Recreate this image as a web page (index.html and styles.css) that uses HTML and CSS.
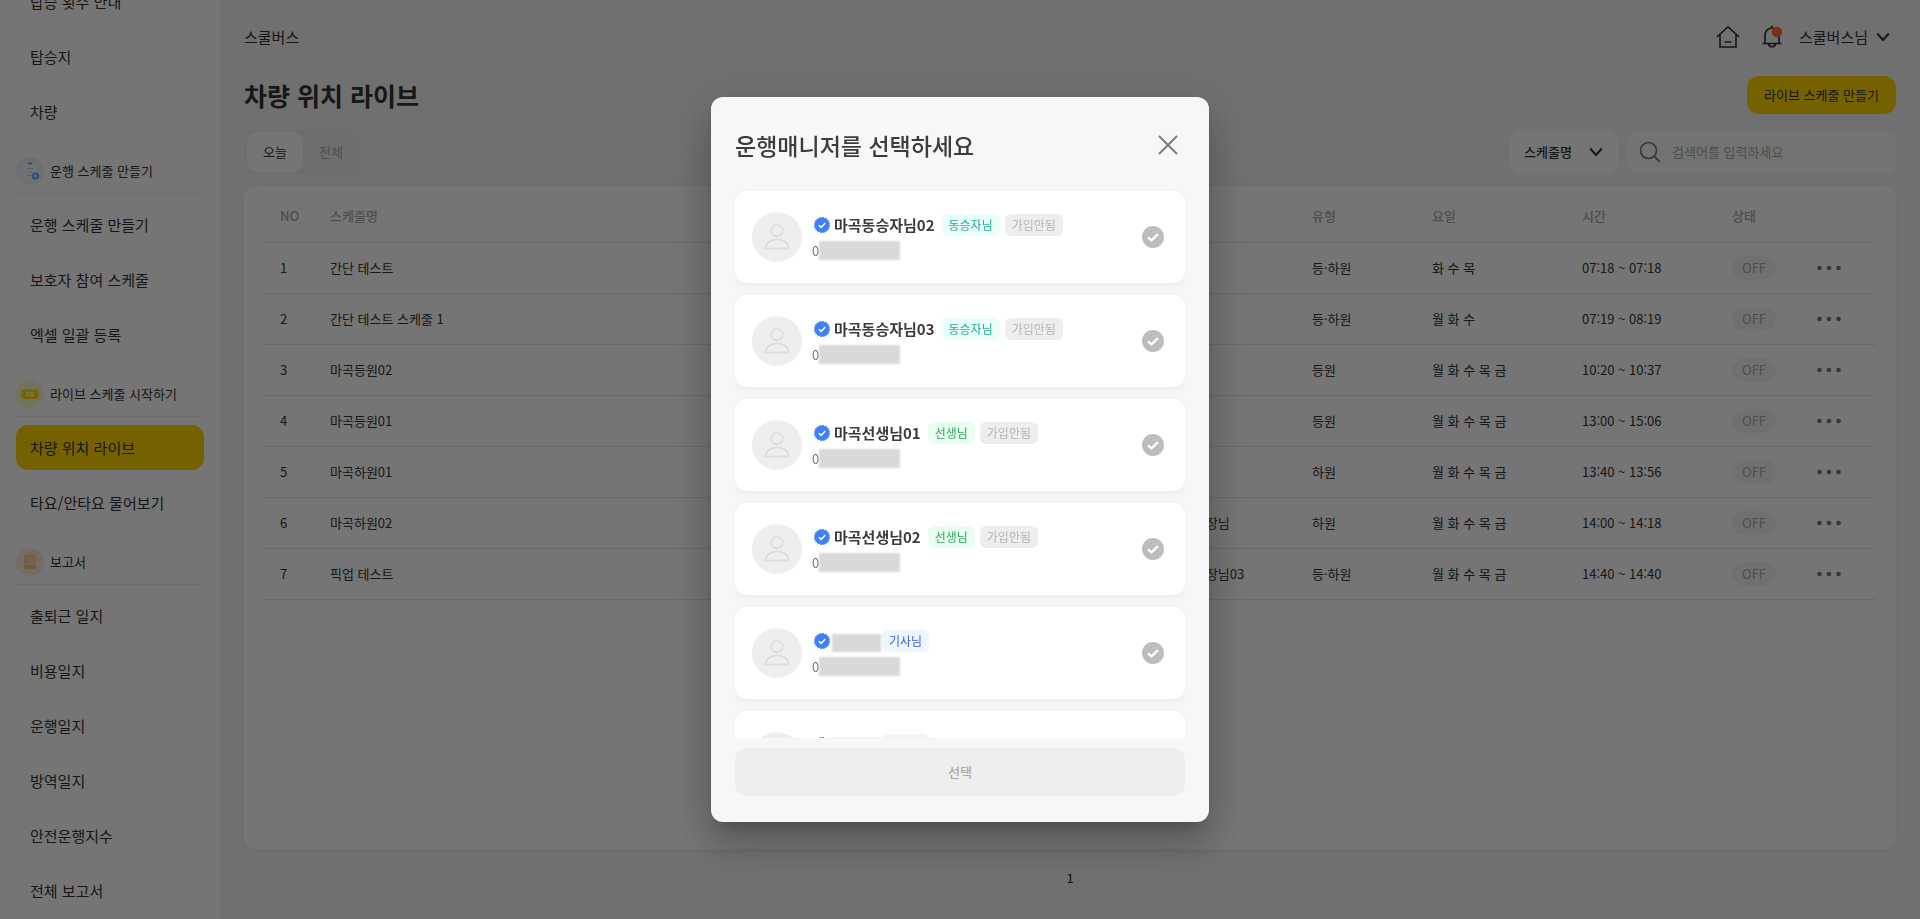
FILE: index.html
```html
<!DOCTYPE html>
<html lang="ko">
<head>
<meta charset="utf-8">
<title>차량 위치 라이브</title>
<link rel="stylesheet" href="styles.css">
</head>
<body>
<svg class="sprite" aria-hidden="true">
  <symbol id="chevron" viewBox="0 0 14 10"><path d="M1.2 1.5 7 8l5.800-6.500" fill="none" stroke="currentColor" stroke-width="2"/></symbol>
  <symbol id="person" viewBox="0 0 50 50"><g fill="none" stroke="#dcdcdc" stroke-width="1.600"><circle cx="25" cy="18.500" r="5.800"/><path d="M13.500 36.500c0-5.500 4.500-9 11.500-9s11.500 3.500 11.500 9z" stroke-linejoin="round"/></g></symbol>
  <symbol id="verified" viewBox="0 0 16 16"><circle cx="8" cy="8" r="7.300" fill="#3f7ffb"/><circle cx="8" cy="8" r="7.300" fill="none" stroke="#3f7ffb" stroke-width="1.400" stroke-dasharray="1.900 .967"/><path d="M4.800 8.200 7.200 10.400 11.300 6.100" fill="none" stroke="#fff" stroke-width="1.500"/></symbol>
  <symbol id="check" viewBox="0 0 22 22"><path d="M6 11.200 9.600 14.400 16 8" fill="none" stroke="#fff" stroke-width="2.200"/></symbol>
  <symbol id="dots" viewBox="0 0 24 6"><g fill="currentColor"><circle cx="2.500" cy="3" r="2.300"/><circle cx="12" cy="3" r="2.300"/><circle cx="21.500" cy="3" r="2.300"/></g></symbol>
</svg>

<div class="app">
  <nav class="sidebar" aria-label="메뉴">
    <a class="nav-item" href="#">탑승 횟수 안내</a>
    <a class="nav-item" href="#">탑승지</a>
    <a class="nav-item" href="#">차량</a>
    <h2 class="nav-section">
      <svg width="28" height="28" viewBox="0 0 28 28"><circle cx="14" cy="14" r="14" fill="#eaf3ff"/><rect x="8" y="6" width="12" height="16" rx="2" fill="#fbfbfb"/><rect x="11.500" y="5.500" width="5" height="2" rx="1" fill="#7db5f5"/><path d="M11 11.500h6M11 15h6M11 18.500h4" stroke="#c9ced6" stroke-width="1"/><circle cx="19.500" cy="19" r="3.600" fill="#64a3ee"/><path d="M19.500 17v4M17.500 19h4" stroke="#fff" stroke-width="1"/></svg>
      운행 스케줄 만들기
    </h2>
    <a class="nav-item" href="#">운행 스케줄 만들기</a>
    <a class="nav-item" href="#">보호자 참여 스케줄</a>
    <a class="nav-item" href="#">엑셀 일괄 등록</a>
    <h2 class="nav-section">
      <svg width="28" height="28" viewBox="0 0 28 28"><circle cx="14" cy="14" r="14" fill="#fff7cf"/><rect x="5" y="9.500" width="18" height="9.500" rx="4" fill="#ffdb00"/><ellipse cx="12" cy="14.300" rx="1.700" ry="1.900" fill="none" stroke="#fff" stroke-width="1.200"/><path d="M15.500 12v4.600M18 12.200l-2.300 2.100L18 16.500" fill="none" stroke="#fff" stroke-width="1.100"/></svg>
      라이브 스케줄 시작하기
    </h2>
    <a class="nav-item active" href="#" aria-current="page">차량 위치 라이브</a>
    <a class="nav-item" href="#">타요/안타요 물어보기</a>
    <h2 class="nav-section">
      <svg width="28" height="28" viewBox="0 0 28 28"><circle cx="14" cy="14" r="14" fill="#ffeedd"/><path d="M8 8.500a2 2 0 0 1 2-2h7.500a2 2 0 0 1 2 2V19h-9v1.500A1.500 1.500 0 0 1 8 19.500z" fill="#ffcf94"/><path d="M11 18h9v1.200a1.500 1.500 0 0 1-1.500 1.500h-9" fill="#fbc078"/><path d="M11.500 10h5.500M11.500 12.800h5.500M11.500 15.600h5.500" stroke="#ffeedd" stroke-width="1"/></svg>
      보고서
    </h2>
    <a class="nav-item" href="#">출퇴근 일지</a>
    <a class="nav-item" href="#">비용일지</a>
    <a class="nav-item" href="#">운행일지</a>
    <a class="nav-item" href="#">방역일지</a>
    <a class="nav-item" href="#">안전운행지수</a>
    <a class="nav-item" href="#">전체 보고서</a>
  </nav>

  <main class="main">
    <header class="topbar">
      <span>스쿨버스</span>
      <div class="topbar-right">
        <button class="plain" type="button" aria-label="홈"><svg width="24" height="24" viewBox="0 0 24 24"><path d="M.8 12 12 1.800 23.200 12M4 9.500V22h16V9.500M8.500 17h7" fill="none" stroke="currentColor" stroke-width="1.600"/></svg></button>
        <button class="plain" type="button" aria-label="알림"><svg width="24" height="24" viewBox="0 0 24 24"><path d="M12 .8v3M5 18v-8a7 7 0 0 1 14 0v8M2.500 18.500h19M8.500 19a3.600 3.600 0 0 0 7 0" fill="none" stroke="currentColor" stroke-width="1.700"/><circle cx="17" cy="7" r="5.200" fill="#ff6f3d"/></svg></button>
        <button class="plain user" type="button">스쿨버스님 <svg width="14" height="10"><use href="#chevron"/></svg></button>
      </div>
    </header>

    <div class="title-row">
      <h1>차량 위치 라이브</h1>
      <button class="primary" type="button">라이브 스케줄 만들기</button>
    </div>

    <div class="filter-row">
      <div class="tabs">
        <button class="tab selected" type="button">오늘</button>
        <button class="tab" type="button">전체</button>
      </div>
      <div class="filters">
        <div class="select-wrap">
          <select aria-label="검색 조건"><option>스케줄명</option></select>
          <svg width="14" height="10"><use href="#chevron"/></svg>
        </div>
        <label class="search">
          <svg width="22" height="22" viewBox="0 0 22 22"><circle cx="9.500" cy="9.500" r="8" fill="none" stroke="currentColor" stroke-width="1.600"/><path d="m15.300 15.300 5.500 5.500" stroke="currentColor" stroke-width="1.800"/></svg>
          <input type="text" placeholder="검색어를 입력하세요" aria-label="검색어">
        </label>
      </div>
    </div>

    <section class="card">
      <table>
        <colgroup><col class="c-no"><col><col class="c-manager"><col class="c-type"><col class="c-days"><col class="c-time"><col class="c-state"><col class="c-more"></colgroup>
        <thead><tr><th>NO</th><th>스케줄명</th><th>매니저</th><th>유형</th><th>요일</th><th>시간</th><th>상태</th><th></th></tr></thead>
        <tbody>
          <tr><td>1</td><td>간단 테스트</td><td></td><td>등·하원</td><td>화 수 목</td><td>07:18 ~ 07:18</td><td><span class="off">OFF</span></td><td><button class="more" type="button" aria-label="더보기"><svg width="24" height="6"><use href="#dots"/></svg></button></td></tr>
          <tr><td>2</td><td>간단 테스트 스케줄 1</td><td></td><td>등·하원</td><td>월 화 수</td><td>07:19 ~ 08:19</td><td><span class="off">OFF</span></td><td><button class="more" type="button" aria-label="더보기"><svg width="24" height="6"><use href="#dots"/></svg></button></td></tr>
          <tr><td>3</td><td>마곡등원02</td><td></td><td>등원</td><td>월 화 수 목 금</td><td>10:20 ~ 10:37</td><td><span class="off">OFF</span></td><td><button class="more" type="button" aria-label="더보기"><svg width="24" height="6"><use href="#dots"/></svg></button></td></tr>
          <tr><td>4</td><td>마곡등원01</td><td></td><td>등원</td><td>월 화 수 목 금</td><td>13:00 ~ 15:06</td><td><span class="off">OFF</span></td><td><button class="more" type="button" aria-label="더보기"><svg width="24" height="6"><use href="#dots"/></svg></button></td></tr>
          <tr><td>5</td><td>마곡하원01</td><td></td><td>하원</td><td>월 화 수 목 금</td><td>13:40 ~ 13:56</td><td><span class="off">OFF</span></td><td><button class="more" type="button" aria-label="더보기"><svg width="24" height="6"><use href="#dots"/></svg></button></td></tr>
          <tr><td>6</td><td>마곡하원02</td><td>마곡원장님</td><td>하원</td><td>월 화 수 목 금</td><td>14:00 ~ 14:18</td><td><span class="off">OFF</span></td><td><button class="more" type="button" aria-label="더보기"><svg width="24" height="6"><use href="#dots"/></svg></button></td></tr>
          <tr><td>7</td><td>픽업 테스트</td><td>마곡원장님03</td><td>등·하원</td><td>월 화 수 목 금</td><td>14:40 ~ 14:40</td><td><span class="off">OFF</span></td><td><button class="more" type="button" aria-label="더보기"><svg width="24" height="6"><use href="#dots"/></svg></button></td></tr>
        </tbody>
      </table>
    </section>
    <div class="pagination"><button class="plain" type="button">1</button></div>
  </main>
</div>

<div class="overlay">
  <div class="dialog" role="dialog" aria-modal="true" aria-labelledby="dialog-title">
    <header class="dialog-head">
      <h2 id="dialog-title">운행매니저를 선택하세요</h2>
      <button class="plain close" type="button" aria-label="닫기"><svg width="20" height="20" viewBox="0 0 20 20"><path d="m1 1 18 18M19 1 1 19" stroke="currentColor" stroke-width="1.800"/></svg></button>
    </header>
    <div class="list">
      <label class="person">
        <svg class="avatar" width="50" height="50"><use href="#person"/></svg>
        <span class="info">
          <span class="name-line"><svg width="16" height="16"><use href="#verified"/></svg><strong>마곡동승자님02</strong><span class="tag teal">동승자님</span><span class="tag gray">가입안됨</span></span>
          <span class="phone">0<span class="mask"></span></span>
        </span>
        <span class="pick"><input type="radio" name="manager"><svg width="22" height="22"><use href="#check"/></svg></span>
      </label>
      <label class="person">
        <svg class="avatar" width="50" height="50"><use href="#person"/></svg>
        <span class="info">
          <span class="name-line"><svg width="16" height="16"><use href="#verified"/></svg><strong>마곡동승자님03</strong><span class="tag teal">동승자님</span><span class="tag gray">가입안됨</span></span>
          <span class="phone">0<span class="mask"></span></span>
        </span>
        <span class="pick"><input type="radio" name="manager"><svg width="22" height="22"><use href="#check"/></svg></span>
      </label>
      <label class="person">
        <svg class="avatar" width="50" height="50"><use href="#person"/></svg>
        <span class="info">
          <span class="name-line"><svg width="16" height="16"><use href="#verified"/></svg><strong>마곡선생님01</strong><span class="tag green">선생님</span><span class="tag gray">가입안됨</span></span>
          <span class="phone">0<span class="mask"></span></span>
        </span>
        <span class="pick"><input type="radio" name="manager"><svg width="22" height="22"><use href="#check"/></svg></span>
      </label>
      <label class="person">
        <svg class="avatar" width="50" height="50"><use href="#person"/></svg>
        <span class="info">
          <span class="name-line"><svg width="16" height="16"><use href="#verified"/></svg><strong>마곡선생님02</strong><span class="tag green">선생님</span><span class="tag gray">가입안됨</span></span>
          <span class="phone">0<span class="mask"></span></span>
        </span>
        <span class="pick"><input type="radio" name="manager"><svg width="22" height="22"><use href="#check"/></svg></span>
      </label>
      <label class="person">
        <svg class="avatar" width="50" height="50"><use href="#person"/></svg>
        <span class="info">
          <span class="name-line"><svg width="16" height="16"><use href="#verified"/></svg><span class="mask name-mask"></span><span class="tag blue">기사님</span></span>
          <span class="phone">0<span class="mask"></span></span>
        </span>
        <span class="pick"><input type="radio" name="manager" aria-label="기사님"><svg width="22" height="22"><use href="#check"/></svg></span>
      </label>
      <label class="person">
        <svg class="avatar" width="50" height="50"><use href="#person"/></svg>
        <span class="info">
          <span class="name-line"><svg width="16" height="16"><use href="#verified"/></svg><span class="mask name-mask"></span><span class="tag blue">기사님</span></span>
          <span class="phone">0<span class="mask"></span></span>
        </span>
        <span class="pick"><input type="radio" name="manager" aria-label="기사님"><svg width="22" height="22"><use href="#check"/></svg></span>
      </label>
    </div>
    <button class="submit" type="button" disabled>선택</button>
  </div>
</div>
</body>
</html>
```
FILE: styles.css
```css
* { box-sizing: border-box; }

body {
  margin: 0;
  background: #f5f5f5;
  color: #333;
  font-family: "Noto Sans CJK KR", "Noto Sans", sans-serif;
  font-size: 13px;
  line-height: 20px;
}

button, input, select { font: inherit; color: inherit; }
button { border: 0; padding: 0; cursor: pointer; }
svg { display: block; flex: none; }
h1, h2 { margin: 0; }
.sprite { position: absolute; width: 0; height: 0; }
.plain { display: flex; align-items: center; background: none; }

.app { display: flex; height: 100vh; overflow: hidden; }

/* Sidebar */
.sidebar {
  flex: none;
  width: 220px;
  padding: 0 16px 6px;
  background: #fff;
  display: flex;
  flex-direction: column;
  justify-content: flex-end;
  gap: 10px;
  overflow: hidden;
}
.nav-item {
  flex: none;
  display: flex;
  align-items: center;
  height: 45px;
  padding: 0 14px;
  border-radius: 12px;
  color: #333;
  font-size: 15px;
  text-decoration: none;
}
.nav-item.active { background: #ffd400; }
.nav-section {
  flex: none;
  display: flex;
  align-items: center;
  gap: 6px;
  height: 50px;
  margin-bottom: -2px;
  padding: 13px 0 8px;
  border-bottom: 1px solid #eee;
  font-size: 13px;
  font-weight: 400;
}

/* Main column */
.main {
  flex: 1;
  min-width: 0;
  display: flex;
  flex-direction: column;
  padding: 0 24px;
}
.topbar {
  display: flex;
  justify-content: space-between;
  align-items: center;
  height: 76px;
  padding-bottom: 2px;
  font-size: 15px;
}
.topbar-right { display: flex; align-items: center; gap: 20px; padding-right: 6px; }
.user { gap: 8px; margin-left: -5px; }
.title-row { display: flex; justify-content: space-between; align-items: center; }
h1 { font-size: 25px; line-height: 38px; font-weight: 700; }
.primary { height: 38px; padding: 0 17px; border-radius: 12px; background: #ffd400; }

.filter-row { display: flex; justify-content: space-between; align-items: center; margin: 15px 0 11px; }
.tabs { display: flex; padding: 3px; border-radius: 14px; background: #f0f0f0; }
.tab { height: 40px; padding: 0 16px; border-radius: 12px; background: none; color: #aaa; }
.tab.selected { background: #fff; color: #333; }
.filters { display: flex; align-items: center; gap: 7px; }
.select-wrap { display: grid; width: 110px; align-items: center; }
.select-wrap > * { grid-area: 1 / 1; }
.select-wrap svg { justify-self: end; margin-right: 16px; pointer-events: none; }
.select-wrap select {
  appearance: none;
  width: 100%;
  height: 46px;
  padding: 0 15px;
  border: 0;
  border-radius: 12px;
  background: #fff;
  font-weight: 500;
}
.search {
  display: flex;
  align-items: center;
  gap: 11px;
  width: 270px;
  height: 44px;
  padding: 0 13px;
  border-radius: 12px;
  background: #fafafa;
  color: #777;
}
.search input { flex: 1; min-width: 0; border: 0; padding: 0; background: none; outline: 0; }
.search input::placeholder { color: #aaa; opacity: 1; }

.card {
  flex: 1;
  padding: 5px 20px;
  border-radius: 12px;
  background: #fff;
  box-shadow: 0 0 12px rgba(0, 0, 0, .05);
}
table { width: 100%; table-layout: fixed; border-collapse: collapse; }
th, td { height: 51px; padding: 0 16px; border-bottom: 1px solid #e9e9e9; text-align: left; font-weight: 400; white-space: nowrap; }
th { color: #aaa; font-weight: 500; }
.c-no { width: 50px; }
.c-manager { width: 142px; }
.c-type { width: 120px; }
.c-days, .c-time { width: 150px; }
.c-state { width: 85px; }
.c-more { width: 75px; }
.off { display: inline-block; padding: 2px 10px; border-radius: 12px; background: #f5f5f5; color: #aaa; }
.more { display: block; background: none; color: #777; }
.pagination { display: flex; justify-content: center; align-items: center; height: 70px; padding-bottom: 12px; font-size: 12px; color: #000; }

/* Dialog */
.overlay {
  position: fixed;
  inset: 0;
  display: flex;
  align-items: center;
  justify-content: center;
  background: rgba(0, 0, 0, .54);
}
.dialog {
  display: flex;
  flex-direction: column;
  width: 498px;
  height: calc(100vh - 194px);
  padding: 0 24px 26px;
  border-radius: 12px;
  background: #f7f7f7;
  box-shadow: 0 11px 15px -7px rgba(0, 0, 0, .2), 0 24px 38px 3px rgba(0, 0, 0, .14), 0 9px 46px 8px rgba(0, 0, 0, .12);
}
.dialog-head { flex: none; display: flex; justify-content: space-between; align-items: center; height: 85px; padding: 11px 7px 0 0; }
.dialog-head h2 { font-size: 23px; line-height: 34px; font-weight: 500; color: #3c3c3c; }
.close { color: #777; }
.list {
  flex: 1;
  min-height: 0;
  display: flex;
  flex-direction: column;
  gap: 12px;
  padding-top: 9px;
  margin-bottom: 10px;
  overflow: hidden;
}
.person {
  flex: none;
  display: flex;
  align-items: center;
  gap: 10px;
  height: 92px;
  padding: 0 21px 0 17px;
  border-radius: 12px;
  background: #fff;
  box-shadow: 0 2px 8px rgba(0, 0, 0, .05);
}
.avatar { border-radius: 50%; background: #eee; }
.info { flex: 1; display: flex; flex-direction: column; gap: 5px; }
.name-line { display: flex; align-items: center; height: 22px; padding-left: 2px; }
.name-line strong { margin: 0 7px 0 4px; font-size: 15px; color: #3c3c3c; }
.tag { padding: 1px 7px; border-radius: 6px; font-size: 12px; }
.tag + .tag { margin-left: 5px; }
.teal { background: #e9fdfb; color: #25a797; }
.green { background: #e9fdf0; color: #2fa55a; }
.blue { background: #edf6ff; color: #3f5fc8; }
.gray { background: #eee; color: #b5b5b5; }
.phone { display: flex; align-items: center; color: #777; }
.mask { width: 81px; height: 19px; background: #d8d8d8; filter: blur(1px); }
.name-mask { align-self: flex-end; width: 49px; height: 18px; margin: 0 1px 0 2px; }
.pick { display: grid; }
.pick > * { grid-area: 1 / 1; }
.pick input { appearance: none; width: 22px; height: 22px; margin: 0; border-radius: 50%; background: #bdbdbd; }
.pick input:checked { background: #3f7ffb; }
.pick svg { z-index: 1; pointer-events: none; }
.submit { flex: none; height: 48px; border-radius: 12px; background: #eee; color: #aaa; font-weight: 500; }
```
